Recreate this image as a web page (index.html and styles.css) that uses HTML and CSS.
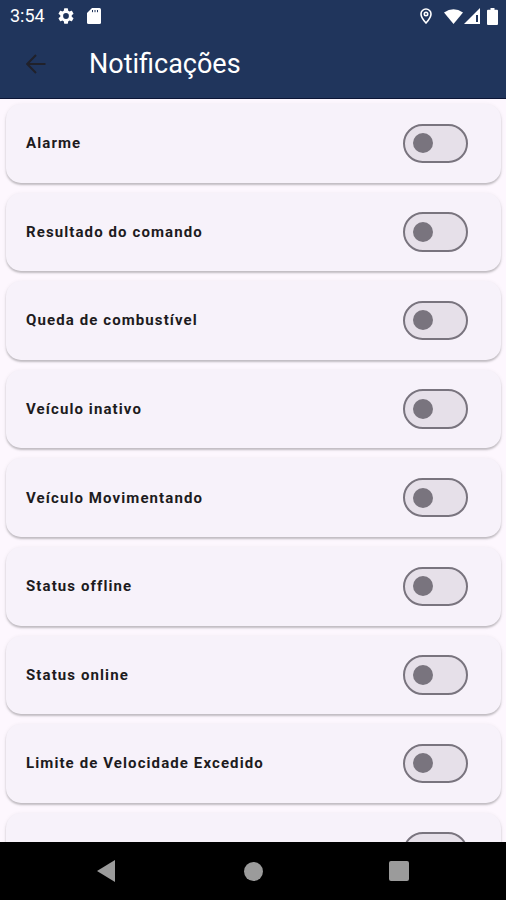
FILE: index.html
```
<!DOCTYPE html>
<html lang="pt-BR">
<head>
<meta charset="utf-8">
<title>Notificações</title>
<link rel="stylesheet" href="styles.css">
</head>
<body>
<div class="screen">
  <header class="header">
    <div class="status">
      <span class="time">3:54</span>
      <svg class="gear" viewBox="2 2 20 20"><path d="M19.14 12.94c.04-.3.06-.61.06-.94s-.02-.64-.07-.94l2.03-1.58a.49.49 0 0 0 .12-.61l-1.92-3.32a.49.49 0 0 0-.59-.22l-2.39.96a7 7 0 0 0-1.62-.94l-.36-2.54a.48.48 0 0 0-.48-.41h-3.84a.47.47 0 0 0-.47.41l-.36 2.54c-.59.24-1.13.57-1.62.94l-2.39-.96a.48.48 0 0 0-.59.22L2.74 8.87a.48.48 0 0 0 .12.61l2.03 1.58a6 6 0 0 0 0 1.88l-2.03 1.58a.49.49 0 0 0-.12.61l1.92 3.32c.12.22.37.29.59.22l2.39-.96c.5.38 1.03.7 1.62.94l.36 2.54c.05.24.24.41.48.41h3.84c.24 0 .44-.17.47-.41l.36-2.54a7 7 0 0 0 1.62-.94l2.39.96c.22.08.47 0 .59-.22l1.92-3.32a.47.47 0 0 0-.12-.61zM12 15.6a3.6 3.6 0 1 1 0-7.2 3.6 3.6 0 0 1 0 7.2z"/></svg>
      <svg class="sd" viewBox="0 0 14 16"><path d="M5 0h7.5Q14 0 14 1.5v13q0 1.500-1.500 1.500h-11Q0 16 0 14.500V5z"/><path class="slots" d="M5.500 2v2.200M8 2v2.200M10.500 2v2.200"/></svg>
      <span class="spacer"></span>
      <svg class="pin" viewBox="0 0 12 16"><path d="M6 1a5 5 0 0 0-5 5c0 3.600 5 9 5 9s5-5.400 5-9a5 5 0 0 0-5-5z"/><circle cx="6" cy="6" r="1.700"/></svg>
      <svg class="wifi" viewBox="0 0 19 15"><path d="M0 3.500Q9.500-3 19 3.500L9.500 15z"/></svg>
      <svg class="cell" viewBox="0 0 16 16"><path fill-rule="evenodd" d="M16 0v16H0zM12 7v7h2V7z"/></svg>
      <svg class="battery" viewBox="0 0 11 17"><path d="M3.500 0h4v1.800H10q1 0 1 1V16q0 1-1 1H1q-1 0-1-1V2.800q0-1 1-1h2.500z"/></svg>
    </div>
    <div class="appbar">
      <svg class="back" viewBox="0 0 20 20"><path d="M19.500 10H1.500M10 1L1.200 10l8.800 9"/></svg>
      <h1 class="title">Notificações</h1>
    </div>
  </header>
  <main class="list">
    <div class="card"><span>Alarme</span><i class="toggle"></i></div>
    <div class="card"><span>Resultado do comando</span><i class="toggle"></i></div>
    <div class="card"><span>Queda de combustível</span><i class="toggle"></i></div>
    <div class="card"><span>Veículo inativo</span><i class="toggle"></i></div>
    <div class="card"><span>Veículo Movimentando</span><i class="toggle"></i></div>
    <div class="card"><span>Status offline</span><i class="toggle"></i></div>
    <div class="card"><span>Status online</span><i class="toggle"></i></div>
    <div class="card"><span>Limite de Velocidade Excedido</span><i class="toggle"></i></div>
    <div class="card"><span></span><i class="toggle"></i></div>
  </main>
  <nav class="nav">
    <svg class="nav-back" viewBox="0 0 18 22"><path d="M18 0v22L0 11z"/></svg>
    <i class="nav-home"></i>
    <i class="nav-recent"></i>
  </nav>
</div>
</body>
</html>
```

FILE: styles.css
```
* { box-sizing: border-box; }
body { margin: 0; font-family: Roboto, sans-serif; }
.screen {
  display: flex;
  flex-direction: column;
  width: 506px;
  height: 900px;
  overflow: hidden;
  background: #fdf7fe;
}
.header {
  flex: none;
  height: 99px;
  background: #20355c;
  border-bottom: 1px solid #0c1636;
}
.status {
  display: flex;
  align-items: center;
  height: 32px;
  padding: 0 8px 0 10px;
  color: #fff;
}
.status svg { fill: #fff; flex: none; }
.time { width: 48px; font-size: 18px; line-height: 32px; }
.gear { width: 16px; height: 16px; }
.sd { width: 14px; height: 16px; margin-left: 13px; }
.sd .slots { stroke: #20355c; stroke-width: 1; }
.spacer { flex: 1; }
.status .pin { width: 12px; height: 16px; margin-right: 12px; fill: none; stroke: #fff; stroke-width: 1.6; }
.wifi { width: 19px; height: 15px; margin-right: 1px; }
.cell { width: 16px; height: 16px; margin-right: 7px; }
.battery { width: 11px; height: 17px; }
.appbar { display: flex; align-items: center; height: 64px; padding-left: 26px; }
.back { width: 20px; height: 20px; fill: none; stroke: #20212a; stroke-width: 2; }
.title { margin: 0 0 0 43px; color: #fff; font-size: 27px; font-weight: 400; line-height: 32px; }
.list {
  flex: 1;
  min-height: 0;
  overflow: hidden;
  display: flex;
  flex-direction: column;
  gap: 10px;
  padding: 5px 5px 0 6px;
}
.card {
  flex: none;
  display: flex;
  align-items: center;
  justify-content: space-between;
  height: 78.6px;
  padding: 0 33.500px 0 20px;
  border-radius: 15px;
  background: #f7f2fa;
  box-shadow: 0 2px 2px rgba(0, 0, 0, .2), 0 1px 4px rgba(0, 0, 0, .08);
  color: #1d1b20;
  font-size: 15px;
  font-weight: 700;
  letter-spacing: 1.1px;
}
.toggle {
  display: flex;
  align-items: center;
  width: 64.500px;
  height: 39.500px;
  padding-left: 8px;
  border: 2px solid #79747e;
  border-radius: 20px;
  background: #e6e0e9;
}
.toggle::before { content: ""; width: 20px; height: 20px; border-radius: 50%; background: #79747e; }
.nav {
  flex: none;
  display: flex;
  align-items: center;
  height: 58px;
  padding-left: 97px;
  background: #000;
}
.nav-back { width: 18px; height: 22px; fill: #9b9b9b; }
.nav-home { width: 19px; height: 19px; margin-left: 129px; border-radius: 50%; background: #9b9b9b; }
.nav-recent { width: 20px; height: 20px; margin-left: 126px; border-radius: 2px; background: #9b9b9b; }
```
